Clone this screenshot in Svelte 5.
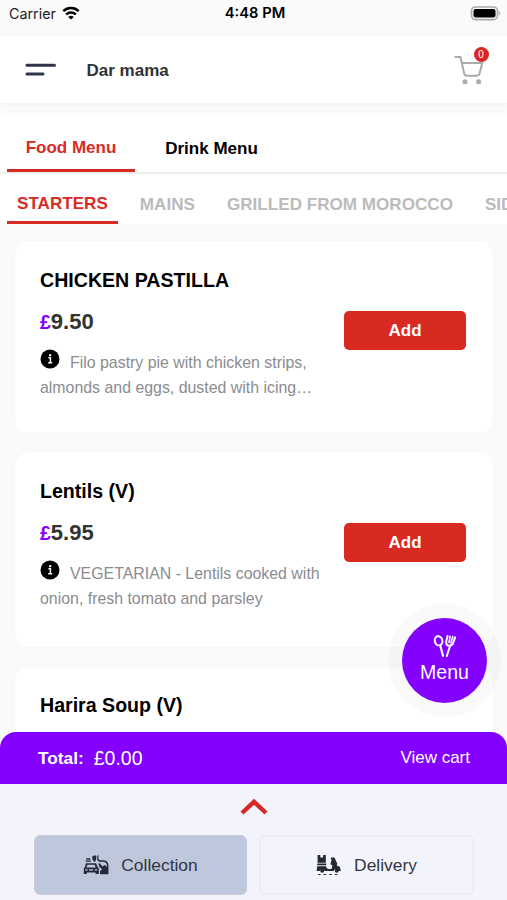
<script lang="ts">
  type Dish = { name: string; price?: string; lines?: string[] };

  const menus = ['Food Menu', 'Drink Menu'];
  const categories = ['STARTERS', 'MAINS', 'GRILLED FROM MOROCCO', 'SIDES'];
  const dishes: Dish[] = [
    {
      name: 'CHICKEN PASTILLA',
      price: '9.50',
      lines: ['Filo pastry pie with chicken strips,', 'almonds and eggs, dusted with icing…'],
    },
    {
      name: 'Lentils (V)',
      price: '5.95',
      lines: ['VEGETARIAN - Lentils cooked with', 'onion, fresh tomato and parsley'],
    },
    { name: 'Harira Soup (V)' },
  ];

  let menu = $state(0);
  let category = $state(0);
  let mode = $state('collection');
  let count = $state(0);
</script>

<div class="screen">
  <div class="status">
    <div class="carrier">
      <span>Carrier</span>
      <svg width="18" height="14" viewBox="0 0 18 14">
        <path d="M1.3 5.2a11 11 0 0 1 15.4 0M4.1 8.5a7 7 0 0 1 9.8 0" fill="none" stroke="#000" stroke-width="2.4" />
        <path d="M9 13.6 6.2 11a4.3 4.3 0 0 1 5.6 0z" />
      </svg>
    </div>
    <span class="time">4:48 PM</span>
    <svg class="battery" width="31" height="15" viewBox="0 0 31 15">
      <rect x="1.5" y="1" width="26" height="12.6" rx="4" fill="#fafafa" stroke="#aaa" stroke-width="1.6" />
      <rect x="3.5" y="3" width="22" height="8.6" rx="2" />
      <path d="M28.8 5a2.6 2.6 0 0 1 0 4.6z" fill="#aaa" />
    </svg>
  </div>

  <header>
    <svg width="32" height="14" viewBox="0 0 32 14">
      <path d="M2 2.3h27.5M2 11h16" stroke="#2e3449" stroke-width="3" stroke-linecap="round" />
    </svg>
    <h1>Dar mama</h1>
    <div class="cart">
      <svg width="30" height="30" viewBox="0 0 30 30" fill="none" stroke="#aaa" stroke-width="2">
        <path d="M0.5 2H6.5L10.2 18.5q.6 2.3 3 2.3H22q2.8 0 3.6-2.3L28.2 8H8.2" />
        <circle cx="11" cy="26.7" r="2.5" fill="#aaa" stroke="none" />
        <circle cx="24.6" cy="26.7" r="2.5" fill="#aaa" stroke="none" />
      </svg>
      <span class="badge">{count}</span>
    </div>
  </header>

  <nav class="menus">
    {#each menus as name, i}
      <button class:active={menu === i} onclick={() => (menu = i)}>{name}</button>
    {/each}
  </nav>
  <nav class="categories">
    {#each categories as name, i}
      <button class:active={category === i} onclick={() => (category = i)}>{name}</button>
    {/each}
  </nav>

  <main>
    {#each dishes as dish}
      <article>
        <div class="info">
          <h2>{dish.name}</h2>
          {#if dish.price}
            <div class="price"><span>£</span>{dish.price}</div>
          {/if}
          {#if dish.lines}
            <p>
              {#each dish.lines as line, i}
                <span class="line">
                  {#if i === 0}
                    <svg width="20" height="20" viewBox="0 0 20 20">
                      <circle cx="10" cy="10" r="9.5" />
                      <path d="M8.4 8.8h2v4.8M8.2 13.8h4" fill="none" stroke="#fff" stroke-width="1.5" />
                      <rect x="9" y="5.2" width="2.2" height="2" fill="#fff" />
                    </svg>
                  {/if}
                  {line}
                </span>
              {/each}
            </p>
          {/if}
        </div>
        {#if dish.price}
          <button class="add" onclick={() => count++}>Add</button>
        {/if}
      </article>
    {/each}
  </main>

  <button class="fab">
    <svg width="24" height="24" viewBox="0 0 24 24" fill="none" stroke="#fff" stroke-linecap="round">
      <ellipse cx="5.6" cy="6.8" rx="3.8" ry="4.6" stroke-width="2" transform="rotate(-14 5.6 6.8)" />
      <path d="M7.4 12 10 21.8" stroke-width="2.2" />
      <path d="M14.6 2 13.2 7.5q-.4 3.6 2.6 4.2 3.4.3 4.4-3L22.2 3.4M17.4 11 13.8 22" stroke-width="2" />
      <path d="M17.2 2.2 16 8.4M19.8 2.6 18 8.8" stroke-width="1.6" />
    </svg>
    <span>Menu</span>
  </button>

  <div class="total">
    <strong>Total:</strong>
    <span class="sum">£0.00</span>
    <span class="view">View cart</span>
  </div>

  <footer>
    <svg class="up" width="28" height="17" viewBox="0 0 28 17">
      <path d="M2 15 14 3.8 26 15" fill="none" stroke="#d62923" stroke-width="4.4" />
    </svg>
    <div class="modes">
      <button class:chosen={mode === 'collection'} onclick={() => (mode = 'collection')}>
        <svg width="26" height="22" viewBox="0 0 26 22" fill="#252a38">
          <path d="M3.3 4.2h4v1.5h-4zM2.8 6.5h5v1.3h-5zM9.2 2.4 12 1.2l1.4 1-.6 4.6-1.3 1.3-2-2.5zM14.2 1.6l1.2-.4v4l2 1.4-1 1.2-2.2-1.8z" />
          <path d="M3 9.3h10l1.8 4 1 1V20h-3.2v-1.6H3.8V20H.8v-5.7l1-1zM4.4 10.8l-1 2.8h9.3l-1-2.8z" fill-rule="evenodd" />
          <path d="M2.2 15.2h2.4v1.4H2.2zM6 15.2h4.2v1.3H6zM11.8 15.2h2.3v1.4h-2.3z" fill="#bfc7dd" />
          <path d="M16 7h4.5q4.2.4 4.2 4.8V20" fill="none" stroke="#252a38" stroke-width="1.5" />
          <path d="M15.2 9.4h1.9l2.2 3 2.5-1.3L25 14v6.2h-8V17l2.2-1.8-2.6-2z" />
        </svg>
        Collection
      </button>
      <button class:chosen={mode === 'delivery'} onclick={() => (mode = 'delivery')}>
        <svg width="26" height="22" viewBox="0 0 26 22" fill="#252830">
          <path d="M1.6 1h2.7v2.5h2.8V1h2.7v7.8H1.6zM1.2 9.6h9v1.7h-9z" />
          <path d="M1.2 12.3h8.6l1.8 2.6h4l.8-3.2-2-1.8 1.3-4.3-1.2-1.2.9-.9h3l3 6.6-.9 1.2 3.4 1.8 1 3.9h-2.2a2.8 2.8 0 0 0-5.2 0H8.8a2.8 2.8 0 0 0-5.2 0H.6z" />
          <circle cx="6.2" cy="16.7" r="2" />
          <circle cx="20.8" cy="16.7" r="2" />
          <path d="M2 20.5h2.6M7.6 20.5h2.6M13.2 20.5h2.6M18.8 20.5h2.6" stroke="#252830" stroke-width="1.1" />
        </svg>
        Delivery
      </button>
    </div>
  </footer>
</div>

<style>
  :global(body) { margin: 0; }
  .screen {
    position: relative; display: flex; flex-direction: column; width: 507px; height: 900px;
    overflow: hidden; background: #fafafa; color: #000;
    font-family: "Liberation Sans", Arial, sans-serif;
  }
  button { font-family: inherit; border: 0; padding: 0; margin: 0; background: none; cursor: pointer; }
  svg { display: block; flex: none; }

  .status {
    display: grid; grid-template-columns: 1fr auto 1fr; align-items: center;
    height: 36px; padding: 0 6px 10px 9px; box-sizing: border-box;
    font: 14.3px Inter, sans-serif; color: #222;
  }
  .carrier { display: flex; align-items: center; gap: 6px; }
  .time { font-weight: 600; font-size: 14.7px; color: #000; }
  .battery { justify-self: end; }

  header {
    display: flex; align-items: center; height: 67px; flex: none; padding: 0 18px 0 25px;
    box-sizing: border-box; background: #fff; box-shadow: 0 1px 4px rgba(0, 0, 0, 0.05);
  }
  h1 { margin: 2px 0 0 29.5px; font-size: 17px; line-height: 24px; color: #333; }
  .cart { position: relative; margin: 1px 5.5px 0 auto; }
  .badge {
    position: absolute; top: -8px; right: -5px; width: 15px; height: 15px; border-radius: 50%;
    background: #d92622; color: #fff; font-size: 10px; line-height: 16px; text-align: center;
  }

  .menus {
    display: flex; height: 59px; flex: none; margin-top: 12px; padding-left: 7px;
    box-sizing: border-box; background: #fff; border-bottom: 2px solid #eee;
  }
  .menus button {
    width: 128px; padding-top: 13px; margin-right: 12.5px; font-size: 17px; font-weight: bold;
    border-bottom: 3px solid transparent;
  }
  .menus button.active { padding-top: 11px; }
  .categories {
    display: flex; height: 50px; flex: none; padding-left: 7px; box-sizing: border-box;
    background: #fff; overflow: hidden;
  }
  .categories button {
    flex: none; padding: 15px 10px 0; margin-right: 12px; font-size: 17.1px; font-weight: bold;
    color: #bbb; white-space: nowrap; border-bottom: 3px solid transparent;
  }
  .categories button.active { padding-top: 13px; }
  .menus .active, .categories .active { color: #d92b25; border-bottom-color: #d92b25; }

  main { flex: 1; min-height: 0; overflow: hidden; padding: 17px 14px 0 15px; }
  article {
    display: flex; justify-content: space-between; height: 192px; margin-bottom: 19px;
    padding: 27px 27px 0 25px; box-sizing: border-box; background: #fff; border-radius: 14px;
    box-shadow: 0 0 3px rgba(0, 0, 0, 0.025);
  }
  article:nth-child(2) { height: 195px; margin-bottom: 20px; }
  article:nth-child(3) { padding-top: 26px; }
  h2 { margin: 0; font-size: 19.6px; line-height: 24px; white-space: nowrap; }
  .info { width: 290px; }
  .price { margin-top: 17px; font-size: 22px; line-height: 26px; font-weight: bold; color: #333; }
  .price span { font-size: 19.5px; color: #8400ff; }
  p { margin: 16px 0 0; font-size: 15.9px; line-height: 24.5px; color: #8b8b90; }
  .line { display: flex; white-space: nowrap; gap: 10px; }
  .line svg { margin-top: -2px; }
  .add {
    width: 122px; height: 39px; margin-top: 43px; border-radius: 5px; background: #d92923;
    color: #fff; font-size: 17px; font-weight: bold;
  }
  article:nth-child(2) .add { margin-top: 44px; }

  .fab {
    position: absolute; top: 604px; left: 388px; z-index: 2; width: 113px; height: 113px;
    display: flex; flex-direction: column; align-items: center; justify-content: center; gap: 3px;
    padding-bottom: 3px; border: 14px solid rgba(0, 0, 0, 0.025); border-radius: 50%;
    background: #8400ff; background-clip: padding-box; color: #fff; font-size: 19.5px;
  }

  .total {
    position: relative; z-index: 1; display: flex; align-items: center; height: 52px; flex: none;
    margin-top: -16px; padding: 0 37px 0 38px; box-sizing: border-box; background: #8400ff;
    border-radius: 16px 16px 0 0; color: #fff; font-size: 17.3px;
  }
  .sum { margin-left: 10px; font-size: 19.5px; }
  .view { margin-left: auto; font-size: 17px; }

  footer { height: 116px; flex: none; background: #f2f3fb; }
  .up { margin: 14px auto 0; }
  .modes { display: flex; gap: 12px; padding: 20px 33px 0 34px; }
  .modes button {
    flex: 1; display: flex; align-items: center; justify-content: center; gap: 12px; height: 60px;
    box-sizing: border-box; border: 2px solid #ebecf1; border-radius: 6px; font-size: 17.4px; color: #333640;
  }
  .modes .chosen { background: #bfc7dd; border: 1px solid #c8cddd; }
</style>
